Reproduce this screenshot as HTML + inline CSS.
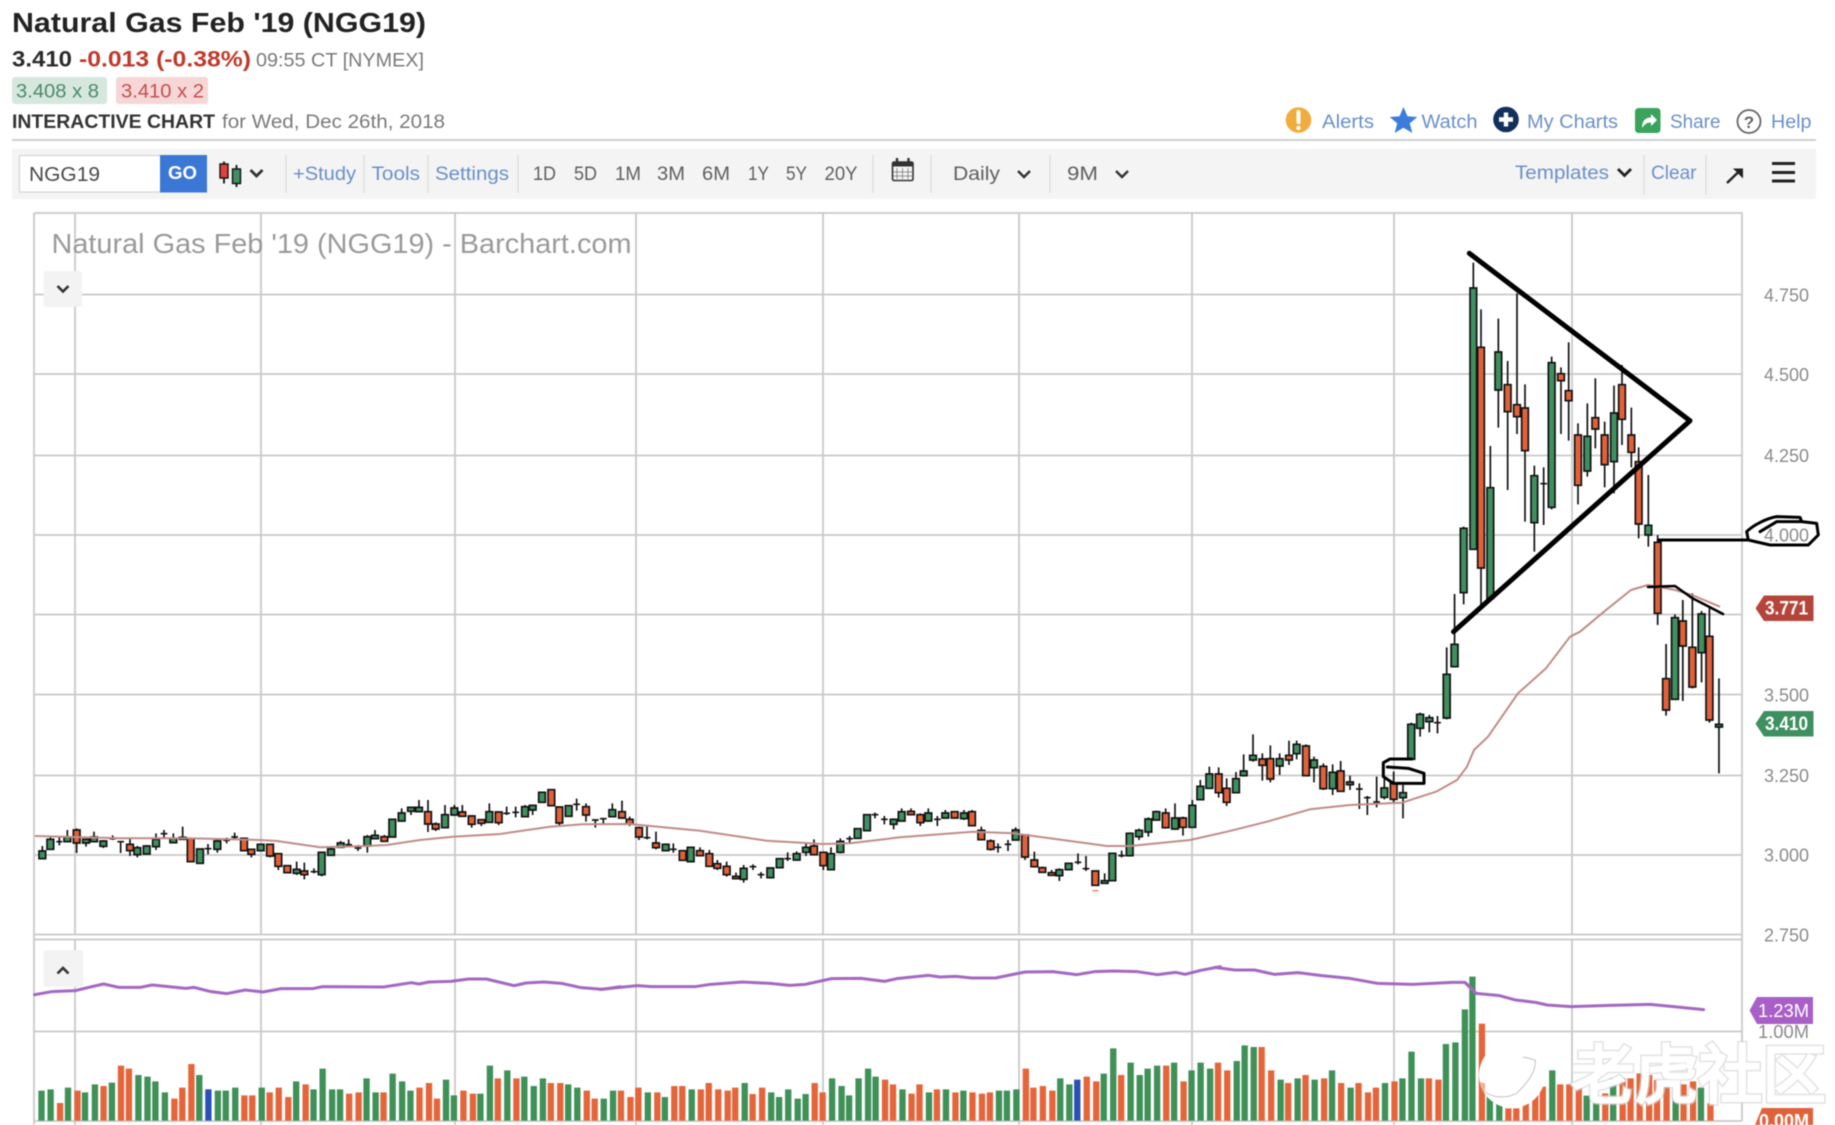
<!DOCTYPE html>
<html><head><meta charset="utf-8"><title>Natural Gas Feb '19 (NGG19)</title>
<style>
html,body{margin:0;padding:0;background:#fff;width:1835px;height:1125px;overflow:hidden}
svg{display:block;filter:blur(.5px)}
text{font-family:"Liberation Sans","Noto Sans CJK SC",sans-serif}
.lnk{fill:#6a90c8;font-size:19px}
.tb{fill:#5f5f5f;font-size:19px}
.ax{fill:#8a8a8a;font-size:18px}
.w{fill:none;stroke:#111;stroke-width:5}
.g{fill:#3f8f5f;stroke:#111;stroke-width:5}
.r{fill:#e0613a;stroke:#111;stroke-width:5}
.pu{fill:none;stroke:#a568c2;stroke-width:9;stroke-linejoin:round;stroke-linecap:round}
.vg{fill:none;stroke:#3f9158;stroke-width:16}
.vr{fill:none;stroke:#e5653b;stroke-width:16}
.vb{fill:none;stroke:#2a50b8;stroke-width:16}
</style></head><body>
<svg width="1835" height="1125" viewBox="0 0 1835 1125" xmlns="http://www.w3.org/2000/svg">
<rect width="1835" height="1125" fill="#fff"/>

<!-- header -->
<text x="12" y="32" font-size="28" font-weight="700" fill="#222" textLength="414" lengthAdjust="spacingAndGlyphs">Natural Gas Feb '19 (NGG19)</text>
<text x="12" y="66.5" font-size="22" font-weight="700" fill="#2b2b2b" textLength="60" lengthAdjust="spacingAndGlyphs">3.410</text>
<text x="79" y="66.5" font-size="22" font-weight="700" fill="#c0392b" textLength="172" lengthAdjust="spacingAndGlyphs">-0.013 (-0.38%)</text>
<text x="256" y="66.5" font-size="19.5" fill="#7a7a7a" textLength="168" lengthAdjust="spacingAndGlyphs">09:55 CT [NYMEX]</text>
<rect x="12" y="77" width="95" height="27" rx="3" fill="#d6e8dd"/>
<text x="16" y="97.5" font-size="19" fill="#4c8a69" textLength="83" lengthAdjust="spacingAndGlyphs">3.408 x 8</text>
<rect x="116" y="77" width="92" height="27" rx="3" fill="#f6d6d6"/>
<text x="121" y="97.5" font-size="19" fill="#c44f4f" textLength="83" lengthAdjust="spacingAndGlyphs">3.410 x 2</text>
<text x="12" y="128" font-size="19" font-weight="700" fill="#333" textLength="203" lengthAdjust="spacingAndGlyphs">INTERACTIVE CHART</text>
<text x="222" y="128" font-size="19" fill="#7a7a7a" textLength="223" lengthAdjust="spacingAndGlyphs">for Wed, Dec 26th, 2018</text>

<!-- top right links -->
<circle cx="1298.5" cy="120" r="12.8" fill="#f0ad3f"/>
<path d="M1298.5 112v10" stroke="#fff" stroke-width="4" stroke-linecap="round"/><circle cx="1298.5" cy="128" r="2.2" fill="#fff"/>
<text x="1322" y="128" class="lnk" textLength="52" lengthAdjust="spacingAndGlyphs">Alerts</text>
<path d="M1403.5 107l4 9.3 9.8.7-7.5 6.4 2.5 9.6-8.8-5.2-8.8 5.2 2.5-9.6-7.5-6.4 9.8-.7z" fill="#3b7ddd"/>
<text x="1421.5" y="128" class="lnk" textLength="56" lengthAdjust="spacingAndGlyphs">Watch</text>
<circle cx="1506" cy="119.5" r="12.8" fill="#12305e"/>
<path d="M1506 112.5v14M1499 119.5h14" stroke="#fff" stroke-width="4.4"/>
<text x="1527" y="128" class="lnk" textLength="91" lengthAdjust="spacingAndGlyphs">My Charts</text>
<rect x="1635" y="108" width="25.5" height="25" rx="3.5" fill="#3aa35c"/>
<path d="M1642 128c0-7 3-10.500 9-10.500v-3.500l6 6-6 6v-3.500c-4 0-6 1.500-9 5.500z" fill="#fff"/>
<text x="1670" y="128" class="lnk" textLength="50.5" lengthAdjust="spacingAndGlyphs">Share</text>
<circle cx="1749" cy="121.5" r="11.5" fill="none" stroke="#666" stroke-width="1.8"/>
<text x="1749" y="128" font-size="17" font-weight="700" fill="#666" text-anchor="middle">?</text>
<text x="1771" y="128" class="lnk" textLength="40.5" lengthAdjust="spacingAndGlyphs">Help</text>

<rect x="12" y="139" width="1804" height="2" fill="#cfcfcf"/>

<!-- toolbar -->
<rect x="12" y="149" width="1804" height="50" fill="#f4f4f4"/>
<rect x="19.5" y="155.5" width="141" height="36.5" fill="#fff" stroke="#cfcfcf"/>
<text x="29" y="181" font-size="20" fill="#4a4a4a" textLength="71" lengthAdjust="spacingAndGlyphs">NGG19</text>
<rect x="160" y="155" width="47" height="37.5" fill="#3b78d6"/>
<text x="168" y="179" font-size="18" font-weight="700" fill="#fff" textLength="29" lengthAdjust="spacingAndGlyphs">GO</text>
<path d="M224 161.5v22M236.500 165v22" stroke="#111" stroke-width="1.8"/>
<rect x="220" y="164" width="8" height="14" fill="#e0423a" stroke="#111" stroke-width="1.4"/>
<rect x="232.5" y="169" width="8" height="14.5" fill="#3f8f5f" stroke="#111" stroke-width="1.4"/>
<path d="M250.5 170l6 6 6-6" fill="none" stroke="#333" stroke-width="2.8"/>
<path d="M286 155v38M364 155v38M428 155v38M518 155v38M873 155v38M931 155v38M1050 155v38M1644 155v40M1706 155v40" stroke="#dcdcdc" stroke-width="1.2"/>
<text x="293" y="180" class="lnk" textLength="63" lengthAdjust="spacingAndGlyphs">+Study</text>
<text x="371.5" y="180" class="lnk" textLength="48.5" lengthAdjust="spacingAndGlyphs">Tools</text>
<text x="435" y="180" class="lnk" textLength="74" lengthAdjust="spacingAndGlyphs">Settings</text>
<text x="533" y="180" class="tb" textLength="23" lengthAdjust="spacingAndGlyphs">1D</text>
<text x="574" y="180" class="tb" textLength="23" lengthAdjust="spacingAndGlyphs">5D</text>
<text x="615" y="180" class="tb" textLength="26" lengthAdjust="spacingAndGlyphs">1M</text>
<text x="657" y="180" class="tb" textLength="28" lengthAdjust="spacingAndGlyphs">3M</text>
<text x="702" y="180" class="tb" textLength="28" lengthAdjust="spacingAndGlyphs">6M</text>
<text x="748" y="180" class="tb" textLength="21" lengthAdjust="spacingAndGlyphs">1Y</text>
<text x="786" y="180" class="tb" textLength="21" lengthAdjust="spacingAndGlyphs">5Y</text>
<text x="824.5" y="180" class="tb" textLength="33" lengthAdjust="spacingAndGlyphs">20Y</text>
<rect x="892.5" y="162" width="20.5" height="18.5" rx="1.5" fill="#f4f4f4" stroke="#333" stroke-width="1.6"/>
<path d="M892.5 162h20.5v4.500h-20.500z" fill="#333"/><path d="M897 158v6M908.5 158v6" stroke="#333" stroke-width="2.4"/>
<path d="M897 168v11M902.500 168v11M908 168v11M893 172h20M893 176h20" stroke="#777" stroke-width=".8"/>
<text x="953" y="180" class="tb" textLength="47" lengthAdjust="spacingAndGlyphs">Daily</text>
<path d="M1018 171l6 6 6-6" fill="none" stroke="#333" stroke-width="2.4"/>
<text x="1067" y="180" class="tb" textLength="31" lengthAdjust="spacingAndGlyphs">9M</text>
<path d="M1116 171l6 6 6-6" fill="none" stroke="#333" stroke-width="2.4"/>
<text x="1515" y="179" class="lnk" textLength="94" lengthAdjust="spacingAndGlyphs">Templates</text>
<path d="M1618 169l6.500 6.500 6.500-6.500" fill="none" stroke="#222" stroke-width="2.8"/>
<text x="1651" y="179" class="lnk" textLength="45.5" lengthAdjust="spacingAndGlyphs">Clear</text>
<path d="M1727 183l13-12.500" stroke="#222" stroke-width="2.4"/><path d="M1733 168.500h10v10z" fill="#222"/>
<path d="M1772 163.500h23M1772 172.500h23M1772 181h23" stroke="#222" stroke-width="3"/>

<!-- grid -->
<g fill="none" stroke="#c9c9c9" stroke-width="1.8">
<path d="M34 213H1742V1121M34 213V1125"/>
<path d="M34 294.500H1742M34 374H1742M34 455.500H1742M34 535H1742M34 614.500H1742M34 694.500H1742M34 775.500H1742M34 855H1742M34 934.500H1742M34 939.500H1742M34 1031.500H1742M34 1121H1742"/>
<path d="M75 213V934M261 213V934M455 213V934M636 213V934M823 213V934M1019 213V934M1192 213V934M1394 213V934M1572 213V934"/>
<path d="M75 939V1125M261 939V1125M455 939V1125M636 939V1125M823 939V1125M1019 939V1125M1192 939V1125M1394 939V1125M1572 939V1125"/>
</g>
<text x="51.5" y="253" font-size="28" fill="#9a9a9a" textLength="580" lengthAdjust="spacingAndGlyphs">Natural Gas Feb '19 (NGG19) - Barchart.com</text>
<rect x="43.5" y="271" width="38.5" height="36" rx="3" fill="#f3f3f3"/>
<path d="M57.5 286l5.500 5.500 5.500-5.500" fill="none" stroke="#333" stroke-width="2.6"/>
<rect x="43.5" y="950" width="39.5" height="37" rx="3" fill="#f3f3f3"/>
<path d="M57.5 973.500l5.500-5.500 5.500 5.500" fill="none" stroke="#333" stroke-width="2.6"/>

<!-- axis labels -->
<text class="ax" x="1764" y="301.5" textLength="45" lengthAdjust="spacingAndGlyphs">4.750</text>
<text class="ax" x="1764" y="381" textLength="45" lengthAdjust="spacingAndGlyphs">4.500</text>
<text class="ax" x="1764" y="462" textLength="45" lengthAdjust="spacingAndGlyphs">4.250</text>
<text class="ax" x="1764" y="541.5" textLength="45" lengthAdjust="spacingAndGlyphs">4.000</text>
<text class="ax" x="1764" y="701.5" textLength="45" lengthAdjust="spacingAndGlyphs">3.500</text>
<text class="ax" x="1764" y="782" textLength="45" lengthAdjust="spacingAndGlyphs">3.250</text>
<text class="ax" x="1764" y="861.5" textLength="45" lengthAdjust="spacingAndGlyphs">3.000</text>
<text class="ax" x="1764" y="941.5" textLength="45" lengthAdjust="spacingAndGlyphs">2.750</text>
<text class="ax" x="1758" y="1038" textLength="51" lengthAdjust="spacingAndGlyphs">1.00M</text>

<!-- candles A -->
<g transform="translate(20,760) scale(.33333)">
<path class="w" d="M67 258V296M91 232V268M118 232V256M109 245h18M142 210V245M170 205V279M198 238V260M222 215V245M250 240V264M278 226V240M268 236h20M302 245V279M292 245h20M330 235V288M352 258V292M380 255V283M408 220V270M432 210V233M422 221h20M460 220V250M488 200V240M564 252V283M554 266h20M592 240V278M620 233V250M610 241h20M644 218V237M634 231h20M694 268V292M750 253V292M775 281V330M802 315V338M830 305V345M853 308V358M882 325V340M872 335h20M905 275V349M933 263V288M962 243V264M986 238V260M976 254h20M1014 255V273M1004 264h20M1042 225V278M1065 210V237M1093 225V246M1145 145V183M1173 142V165M1197 120V157M1224 120V216M1247 187V213M1275 135V203M1303 135V167M1327 135V170M1355 165V203M1384 178V198M1408 130V187M1436 155V195M1460 140V165M1450 160h20M1487 140V172M1477 157h20"/>
<path class="g" d="M57 273h20V296h-20zM81 238h20V268h-20zM132 231h20V245h-20zM188 238h20V249h-20zM212 231h20V245h-20zM240 243h20V259h-20zM342 263h20V284h-20zM370 258h20V282h-20zM398 238h20V260h-20zM450 235h20V248h-20zM530 267h20V310h-20zM582 243h20V268h-20zM712 253h20V272h-20zM820 328h20V340h-20zM895 277h20V344h-20zM923 267h20V286h-20zM952 249h20V262h-20zM1032 230h20V258h-20zM1055 226h20V236h-20zM1107 178h20V231h-20zM1135 159h20V183h-20zM1163 142h20V154h-20zM1187 142h20V155h-20zM1265 164h20V203h-20zM1293 144h20V165h-20zM1398 155h20V187h-20z"/>
<path class="r" d="M160 210h20V249h-20zM320 253h20V272h-20zM478 232h20V238h-20zM502 235h20V305h-20zM662 235h20V272h-20zM684 268h20V283h-20zM740 253h20V288h-20zM765 281h20V319h-20zM792 317h20V338h-20zM843 333h20V344h-20zM1083 230h20V244h-20zM1214 155h20V192h-20zM1237 192h20V207h-20zM1317 156h20V169h-20zM1345 168h20V193h-20zM1374 179h20V190h-20zM1426 156h20V188h-20z"/>
</g>
<!-- candles B -->
<g transform="translate(500,760) scale(.33333)">
<path class="w" d="M75 135V170M98 136V165M178 141V200M230 116V152M220 133h20M258 130V185M286 178V203M276 180h20M310 174V192M300 176h20M337 130V170M366 122V176M389 170V198M417 200V240M441 198V238M431 233h20M468 215V268M497 250V272M520 250V278M510 268h20M600 262V288M628 270V320M652 300V330M680 305V350M708 338V356M731 315V368M759 313V330M749 320h20M783 336V355M773 344h20M811 322V356M863 277V303M853 296h20M890 274V300M918 252V288M942 238V286M970 277V330M993 262V330M1021 235V280M1049 228V252M1039 236h20M1125 158V175M1115 164h20M1153 168V193M1143 178h20M1181 175V208M1205 145V183M1233 145V165M1261 160V198M1285 145V185M1312 168V198M1302 178h20M1336 150V175M1392 150V180M1416 150V197M1444 200V240M1472 238V272M1494 250V278M1484 262h20"/>
<path class="g" d="M65 140h20V170h-20zM88 136h20V150h-20zM116 97h20V127h-20zM196 137h20V169h-20zM327 149h20V170h-20zM487 253h20V272h-20zM562 262h20V305h-20zM721 325h20V358h-20zM801 324h20V353h-20zM829 296h20V323h-20zM880 281h20V300h-20zM908 262h20V277h-20zM983 281h20V329h-20zM1011 244h20V277h-20zM1063 206h20V235h-20zM1091 164h20V212h-20zM1171 178h20V193h-20zM1195 155h20V183h-20zM1275 159h20V183h-20zM1326 159h20V174h-20zM1382 159h20V176h-20z"/>
<path class="r" d="M144 89h20V137h-20zM168 141h20V189h-20zM248 140h20V165h-20zM356 155h20V174h-20zM379 178h20V192h-20zM407 203h20V231h-20zM458 249h20V263h-20zM538 272h20V301h-20zM590 272h20V287h-20zM618 281h20V319h-20zM642 311h20V325h-20zM670 319h20V344h-20zM698 349h20V356h-20zM932 258h20V284h-20zM960 277h20V317h-20zM1223 154h20V164h-20zM1251 164h20V188h-20zM1354 155h20V174h-20zM1406 155h20V197h-20zM1434 211h20V239h-20zM1462 243h20V268h-20z"/>
</g>
<!-- candles C -->
<g transform="translate(950,720) scale(.33333)">
<path class="w" d="M174 360V393M164 373h20M197 322V360M225 345V420M253 395V443M277 440V458M305 450V466M328 445V483M356 428V450M384 400V433M374 427h20M408 408V453M398 446h20M464 460V491M515 392V412M505 407h20M539 337V410M567 326V360M595 292V350M619 272V300M647 265V326M675 250V330M699 290V347M727 240V323M751 180V241M778 140V205M806 142V233M830 175V258M858 156V218M881 103V170M909 43V125M937 100V182M961 76V187M989 100V165M1017 62V135M1040 62V118M1068 73V167M1092 110V187M1120 130V210M1148 133V225M1172 123V216M1200 167V210M1228 190V267M1218 207h20M1252 228V285M1242 233h20M1280 170V262M1270 246h20M1303 170V238M1331 155V248M1359 195V295"/>
<path class="g" d="M187 330h20V360h-20zM318 449h20V467h-20zM346 430h20V449h-20zM454 482h20V490h-20zM477 400h20V482h-20zM529 340h20V407h-20zM557 331h20V350h-20zM585 297h20V336h-20zM609 275h20V300h-20zM665 294h20V327h-20zM717 256h20V322h-20zM741 199h20V239h-20zM768 162h20V205h-20zM848 176h20V218h-20zM871 153h20V167h-20zM899 106h20V120h-20zM979 116h20V138h-20zM1030 73h20V101h-20zM1082 120h20V143h-20zM1138 157h20V206h-20zM1190 186h20V194h-20zM1293 204h20V232h-20zM1349 218h20V233h-20z"/>
<path class="r" d="M215 345h20V411h-20zM243 420h20V440h-20zM267 443h20V457h-20zM295 458h20V466h-20zM426 453h20V496h-20zM637 279h20V323h-20zM689 294h20V322h-20zM796 162h20V218h-20zM820 205h20V247h-20zM927 117h20V136h-20zM951 116h20V177h-20zM1007 106h20V120h-20zM1058 78h20V167h-20zM1110 139h20V206h-20zM1162 153h20V214h-20zM1321 190h20V238h-20z"/>
<path d="M427 512h18" stroke="#e0815f" stroke-width="4"/>
</g>
<!-- candles D -->
<g transform="translate(1300,570) scale(.34118,.33333)">
<path class="w" d="M326 458V568M352 428V500M379 435V487M403 438V490M393 458h20M430 232V448M453 72V225M1073 222V437M1099 133V388M1122 90V393M1150 70V355M1177 123V337M1200 115V458M1228 325V610"/>
<path class="g" d="M316 463h20V568h-20zM342 433h20V475h-20zM369 443h20V455h-20zM420 313h20V444h-20zM443 223h20V290h-20zM1089 143h20V388h-20zM1167 132h20V248h-20zM1218 463h20V471h-20z"/>
<path class="r" d="M1063 326h20V420h-20zM1112 153h20V228h-20zM1140 232h20V351h-20zM1190 199h20V450h-20z"/>
</g>
<!-- candles E -->
<g transform="translate(1400,230) scale(.33333)">
<path class="w" d="M191 890V1123M220 98V958M243 238V1125M271 648V1110M295 266V593M323 393V780M351 190V612M375 463V875M403 707V965M431 712V885M421 761h20M455 380V838M483 412V612M506 337V632M534 580V823M562 520V740M586 445V655M614 575V772M642 467V790M666 405V645M694 533V712M716 652V925M745 735V950M773 915V1185"/>
<path class="g" d="M181 895h20V1088h-20zM210 174h20V958h-20zM261 773h20V1105h-20zM285 366h20V480h-20zM393 737h20V878h-20zM445 398h20V832h-20zM552 619h20V723h-20zM632 549h20V695h-20zM735 886h20V915h-20z"/>
<path class="r" d="M233 352h20V1014h-20zM313 464h20V545h-20zM341 524h20V560h-20zM365 534h20V662h-20zM473 431h20V452h-20zM496 482h20V512h-20zM524 615h20V766h-20zM576 563h20V597h-20zM604 615h20V704h-20zM656 464h20V568h-20zM684 615h20V667h-20zM706 695h20V882h-20zM763 937h20V1150h-20z"/>
</g>

<!-- moving average -->
<path d="M35 836L120 838.300L187 838.300L260 840L277 841L320 847.300L367 846L387 845L420 840L453 836.700L500 834L550 826.700L583 824.300L630 824L700 830.700L767 840.700L823 844L850 843.300L900 837.300L973 831.700L1013 833.300L1050 838.300L1107 846L1130 846L1190 840L1227 831.700L1267 821.700L1310 809.300L1350 805L1402 802.700L1436 791.700L1457 780L1467 766.700L1474 750L1488 736.700L1518 693.300L1546 668.300L1570 636.700L1580 631.700L1604 611.700L1631 590L1648 585L1675 590L1692 595L1720 606.700" fill="none" stroke="#c08c88" stroke-width="2" stroke-linejoin="round"/>

<!-- hand drawn -->
<g fill="none" stroke="#000" stroke-linejoin="round" stroke-linecap="round">
<path d="M1469.300 253.300L1690 420.700L1453.500 631.700" stroke-width="5"/>
<path d="M1658.300 540H1748" stroke-width="3"/>
<g transform="translate(1400,230) scale(.33333)" stroke-width="9">
<path d="M1045 930L1040 905C1060 885 1100 865 1130 860L1200 862L1205 875L1250 880L1255 915L1225 945L1110 945Z"/>
<path d="M1080 905L1130 875L1205 875"/>
</g>
<g transform="translate(950,720) scale(.33333)" stroke-width="9">
<path d="M1385 117L1320 117L1300 128L1300 170L1330 190L1422 190L1422 160L1375 145L1312 141"/>
</g>
<path d="M1648 587L1675 586L1692 598L1723 614" stroke-width="2.6"/>
</g>

<!-- volume panel -->
<g transform="translate(0,930) scale(.39541,.33333)">
<path class="vg" d="M105 482V572M128 478V572M172 473V572M215 487V572M240 463V572M283 458V572M350 435V572M373 440V572M393 454V572M417 487V572M504 435V572M551 482V572M571 482V572M595 473V572M662 473V572M749 454V572M793 478V572M816 416V572M840 478V572M860 478V572M927 445V572M950 487V572M993 431V572M1017 454V572M1038 482V572M1128 449V572M1148 496V572M1215 491V572M1239 407V572M1283 421V572M1326 440V572M1350 468V572M1373 445V572M1437 463V572M1460 473V572M1527 506V572"/>
<path class="vr" d="M152 519V572M196 482V572M262 468V572M306 407V572M326 416V572M441 506V572M461 473V572M484 402V572M618 496V572M638 496V572M682 487V572M705 473V572M729 501V572M773 463V572M883 491V572M907 487V572M970 487V572M1061 473V572M1085 459V572M1105 506V572M1172 482V572M1196 491V572M1259 445V572M1306 445V572M1393 459V572M1417 459V572M1484 482V572M1504 506V572"/>
<path class="vb" d="M527 478V572"/>
<path class="pu" d="M88 194L130 185L190 182L225 172L262 162L300 172L355 172L385 165L470 175L490 172L530 184L573 191L620 180L665 186L710 176L790 176L815 170L970 171L1040 158L1060 162L1085 156L1140 154L1185 147L1230 147L1300 167L1330 159L1375 156L1420 160L1470 173L1525 178L1568 170"/>
</g>
<g transform="translate(600,930) scale(.39541,.33333)">
<path class="vg" d="M33 482V572M121 487V572M164 501V572M232 478V572M366 459V572M433 487V572M453 501V572M476 478V572M500 506V572M520 492V572M587 445V572M611 468V572M630 496V572M654 445V572M678 416V572M697 440V572M765 478V572M832 487V572M875 478V572M919 482V572M1009 482V572M1029 482V572M1053 478V572M1164 445V572M1187 463V572M1274 431V572M1298 355V572M1342 398V572M1365 435V572M1385 416V572M1409 407V572M1452 398V572M1496 421V572M1519 398V572M1543 416V572"/>
<path class="vr" d="M53 482V572M77 501V572M97 473V572M145 487V572M188 468V572M208 468V572M255 478V572M275 459V572M299 478V572M323 482V572M342 473V572M386 492V572M410 473V572M543 459V572M563 487V572M721 449V572M741 463V572M788 491V572M808 463V572M852 478V572M899 487V572M942 487V572M966 491V572M986 487V572M1077 416V572M1096 473V572M1120 468V572M1144 482V572M1231 440V572M1255 454V572M1318 435V572M1432 407V572M1476 454V572M1563 398V572"/>
<path class="vb" d="M1207 449V572"/>
<path class="pu" d="M0 178L95 167L130 170L240 170L280 163L360 156L430 160L480 166L520 163L585 146L660 145L720 154L750 146L830 136L860 141L900 139L940 144L1000 144L1075 126L1145 125L1205 134L1250 125L1300 123L1360 125L1410 134L1455 127L1480 133L1520 121L1568 110"/>
</g>
<g transform="translate(1215,930) scale(.39541,.33333)">
<path class="vg" d="M55 393V572M75 346V572M98 351V572M166 449V572M209 445V572M252 449V572M296 421V572M343 473V572M430 459V572M474 445V572M497 365V572M521 445V572M584 342V572M608 337V572M632 238V572M651 140V572M695 500V572M719 520V572M853 421V572M940 497V572M964 520V572M1007 445V572M1165 465V572M1229 473V572"/>
<path class="vr" d="M31 421V572M118 351V572M142 421V572M185 459V572M229 435V572M276 445V572M319 459V572M363 459V572M387 487V572M407 473V572M454 454V572M541 445V572M565 449V572M675 281V572M742 535V572M762 535V572M786 520V572M810 490V572M829 470V572M873 463V572M896 463V572M920 463V572M987 490V572M1031 445V572M1051 445V572M1074 430V572M1098 435V572M1118 450V572M1142 470V572M1185 463V572M1209 454V572M1253 520V572"/>
<path class="pu" d="M0 112L50 120L100 120L150 133L210 128L270 137L340 145L410 160L500 163L600 157L632 157L660 190L720 197L760 210L810 217L840 225L900 230L1000 226L1100 223L1160 230L1235 239"/>
</g>

<!-- price tags -->
<path d="M1764 595.500H1813.500V621H1764L1755.500 608.200Z" fill="#b5443a"/>
<text x="1765" y="614.5" font-size="19" font-weight="700" fill="#fff" textLength="43" lengthAdjust="spacingAndGlyphs">3.771</text>
<path d="M1764 711H1813.500V736.500H1764L1755.500 723.700Z" fill="#3f9060"/>
<text x="1765" y="730.2" font-size="19" font-weight="700" fill="#fff" textLength="43" lengthAdjust="spacingAndGlyphs">3.410</text>
<path d="M1757 997H1813V1024H1757L1749.500 1010.500Z" fill="#a85fc8"/>
<text x="1758" y="1017" font-size="18" fill="#fff" textLength="51" lengthAdjust="spacingAndGlyphs">1.23M</text>
<path d="M1762 1108H1813V1125H1755Z" fill="#e0623a"/>
<text x="1759" y="1127" font-size="18" font-weight="700" fill="#fff" textLength="50" lengthAdjust="spacingAndGlyphs">0.00M</text>

<!-- watermark -->
<path fill-rule="evenodd" fill="#fff" d="M1512 1042a33 33 0 1 0 .01 0zM1523 1057L1535 1060C1536 1070 1530 1080 1517 1093C1508 1098 1492 1099 1483 1090L1480 1082C1490 1086 1503 1084 1515 1076C1519 1070 1521 1063 1523 1057Z"/>
<path d="M1523 1057L1535 1060C1536 1070 1530 1080 1517 1093C1508 1098 1492 1099 1483 1090" fill="none" stroke="#bdbdbd" stroke-width="1.2"/>
<path d="M1523 1057L1535 1060C1536 1070 1530 1080 1517 1093C1508 1098 1492 1099 1483 1090L1480 1082C1490 1086 1503 1084 1515 1076C1519 1070 1521 1063 1523 1057Z" fill="#fff" opacity=".45"/>
<text x="1571" y="1098" font-size="64" fill="none" stroke="#d4d4d4" stroke-width="5.500" opacity=".65" textLength="255" lengthAdjust="spacingAndGlyphs">老虎社区</text>
<text x="1571" y="1098" font-size="64" fill="#fff" stroke="#fff" stroke-width="2.500" textLength="255" lengthAdjust="spacingAndGlyphs">老虎社区</text>
</svg>
</body></html>
